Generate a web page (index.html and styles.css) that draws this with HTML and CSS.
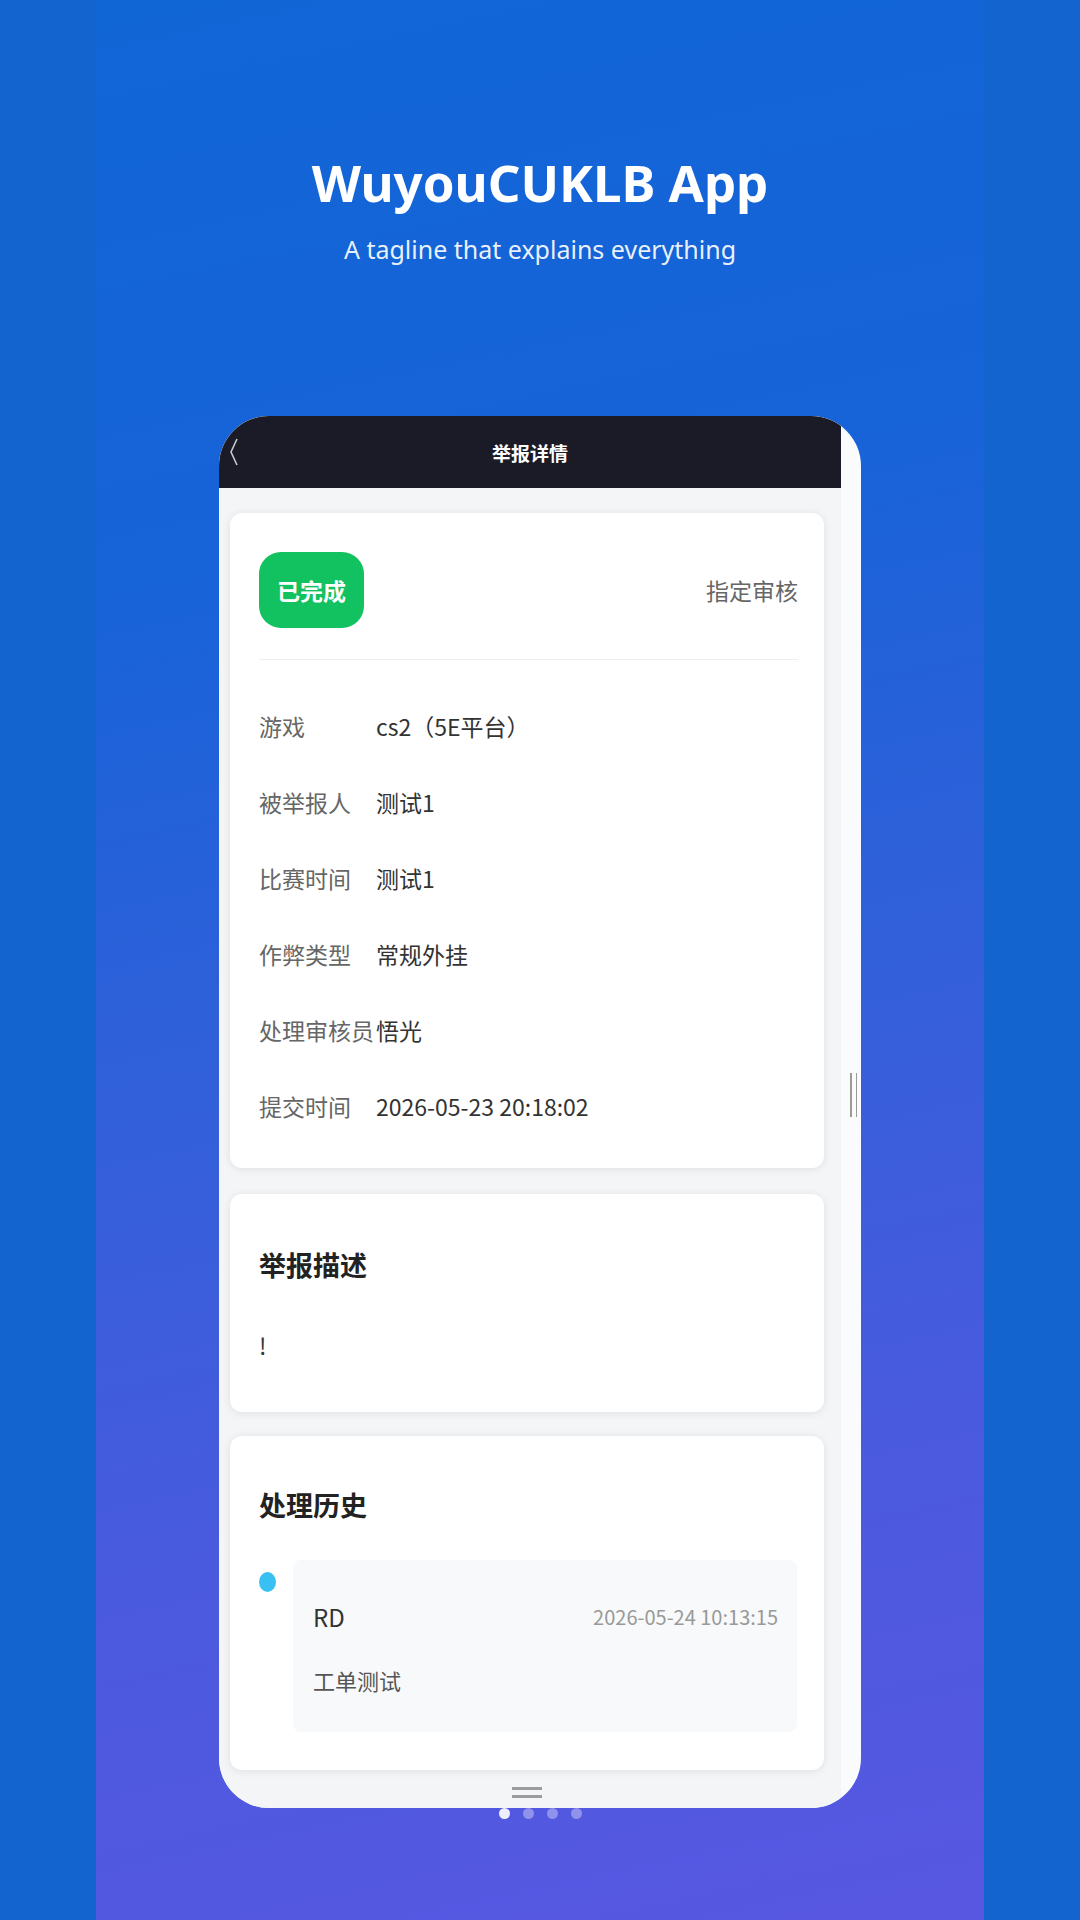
FILE: index.html
```html
<!DOCTYPE html>
<html lang="zh-CN">

<head>
    <meta charset="UTF-8">
    <meta name="viewport" content="width=device-width, initial-scale=1.0">
    <title>WuyouCUKLB App</title>
    <link rel="stylesheet" href="styles.css">
</head>

<body>
    <div class="stage">
        <h1 class="app-title">WuyouCUKLB App</h1>
        <p class="tagline">A tagline that explains everything</p>

        <div class="phone">
            <div class="screen">
                <div class="topbar">
                    <svg class="back" width="10" height="30" viewBox="0 0 10 30">
                        <polyline points="8,2 2,15 8,28" fill="none" stroke="#c9c9cf" stroke-width="1.6" />
                    </svg>
                    <span class="topbar-title">举报详情</span>
                </div>

                <div class="content">
                    <div class="card info-card">
                        <div class="status-row">
                            <span class="badge">已完成</span>
                            <span class="assign">指定审核</span>
                        </div>
                        <div class="divider"></div>
                        <div class="row"><span class="label">游戏</span><span class="value">cs2（5E平台）</span></div>
                        <div class="row"><span class="label">被举报人</span><span class="value">测试1</span></div>
                        <div class="row"><span class="label">比赛时间</span><span class="value">测试1</span></div>
                        <div class="row"><span class="label">作弊类型</span><span class="value">常规外挂</span></div>
                        <div class="row"><span class="label">处理审核员</span><span class="value">悟光</span></div>
                        <div class="row"><span class="label">提交时间</span><span class="value">2026-05-23 20:18:02</span></div>
                    </div>

                    <div class="card desc-card">
                        <h2 class="card-title">举报描述</h2>
                        <p class="desc">!</p>
                    </div>

                    <div class="card history-card">
                        <h2 class="card-title">处理历史</h2>
                        <div class="history-item">
                            <span class="dot"></span>
                            <div class="history-box">
                                <div class="history-head">
                                    <span class="who">RD</span>
                                    <span class="when">2026-05-24 10:13:15</span>
                                </div>
                                <div class="note">工单测试</div>
                            </div>
                        </div>
                    </div>

                    <div class="handle"><span></span><span></span></div>
                </div>
            </div>
            <div class="side">
                <div class="grip"><span></span><span></span></div>
            </div>
        </div>

        <div class="pager">
            <span class="on"></span>
            <span></span>
            <span></span>
            <span></span>
        </div>
    </div>
</body>

</html>
```

FILE: styles.css
```css
body {
    margin: 0;
    background-color: #1464cf;
    font-family: "Noto Sans", "Noto Sans CJK SC", sans-serif;
}

.stage {
    width: 888px;
    height: 1920px;
    margin: 0 auto;
    overflow: hidden;
    background: linear-gradient(168deg, #1166d6 0%, #1763d8 28%, #3160da 52%, #4a5ade 76%, #5857e2 100%);
    display: flex;
    flex-direction: column;
    align-items: center;
    padding-top: 151px;
    box-sizing: border-box;
}

.app-title {
    margin: 0;
    font-size: 51px;
    line-height: 62px;
    font-weight: 700;
    color: #fff;
}

.tagline {
    margin: 21px 0 0;
    font-size: 25px;
    line-height: 31px;
    color: rgba(255, 255, 255, 0.92);
}

/* phone mockup */
.phone {
    margin-top: 151px;
    width: 642px;
    height: 1392px;
    border-radius: 50px;
    overflow: hidden;
    background-color: #fafbfc;
    display: flex;
    font-family: "Noto Sans CJK SC", "Noto Sans", sans-serif;
}

.screen {
    width: 622px;
    background-color: #f4f5f7;
    display: flex;
    flex-direction: column;
}

.side {
    flex: 1;
    padding-top: 657px;
}

.grip {
    display: flex;
    gap: 4px;
    padding-left: 9px;
}

.grip span {
    width: 1.5px;
    height: 44px;
    background-color: #9a9a9a;
}

.topbar {
    height: 72px;
    background-color: #1b1b27;
    display: flex;
    align-items: center;
    justify-content: center;
    position: relative;
}

.back {
    position: absolute;
    left: 10px;
    top: 21px;
}

.topbar-title {
    color: #fff;
    font-size: 19px;
    font-weight: 700;
}

.content {
    padding: 25px 17px 0 11px;
    display: flex;
    flex-direction: column;
}

.card {
    background-color: #fff;
    border-radius: 12px;
    box-shadow: 0 1px 8px rgba(0, 0, 0, 0.09);
}

.info-card {
    padding: 39px 26px 24px 29px;
}

.status-row {
    display: flex;
    justify-content: space-between;
    align-items: center;
}

.badge {
    width: 105px;
    height: 76px;
    border-radius: 22px;
    background-color: #12c160;
    color: #fff;
    font-size: 23px;
    font-weight: 700;
    display: flex;
    align-items: center;
    justify-content: center;
}

.assign {
    font-size: 23px;
    color: #666;
}

.divider {
    margin-top: 31px;
    height: 1px;
    background-color: #eeeeee;
    margin-bottom: 28px;
}

.row {
    display: flex;
    height: 76px;
    align-items: center;
    font-size: 23px;
}

.label {
    min-width: 117px;
    color: #666;
}

.value {
    color: #333;
}

.desc-card {
    margin-top: 26px;
    padding: 51px 29px 47px;
}

.card-title {
    margin: 0;
    font-size: 27px;
    line-height: 40px;
    font-weight: 700;
    color: #222;
}

.desc {
    margin: 40px 0 0;
    font-size: 23px;
    line-height: 40px;
    color: #333;
}

.history-card {
    margin-top: 24px;
    padding: 49px 27px 38px 29px;
}

.history-item {
    display: flex;
    margin-top: 35px;
}

.dot {
    width: 17px;
    height: 20px;
    border-radius: 50%;
    background-color: #38c0f2;
    margin-top: 12px;
    margin-right: 17px;
    flex-shrink: 0;
}

.history-box {
    flex: 1;
    background-color: #f7f9fa;
    border-radius: 8px;
    padding: 40px 19px 36px 20px;
}

.history-head {
    display: flex;
    justify-content: space-between;
    align-items: center;
    height: 32px;
}

.who {
    font-size: 24px;
    color: #333;
}

.when {
    font-size: 20px;
    color: #999;
}

.note {
    margin-top: 32px;
    font-size: 22px;
    line-height: 32px;
    color: #555;
}

.handle {
    margin-top: 17px;
    display: flex;
    flex-direction: column;
    align-items: center;
    gap: 5px;
}

.handle span {
    width: 30px;
    height: 3px;
    background-color: #9c9c9c;
}

.pager {
    display: flex;
    gap: 13px;
}

.pager span {
    width: 11px;
    height: 11px;
    border-radius: 50%;
    background-color: rgba(255, 255, 255, 0.35);
}

.pager .on {
    background-color: rgba(255, 255, 255, 0.9);
}
```
